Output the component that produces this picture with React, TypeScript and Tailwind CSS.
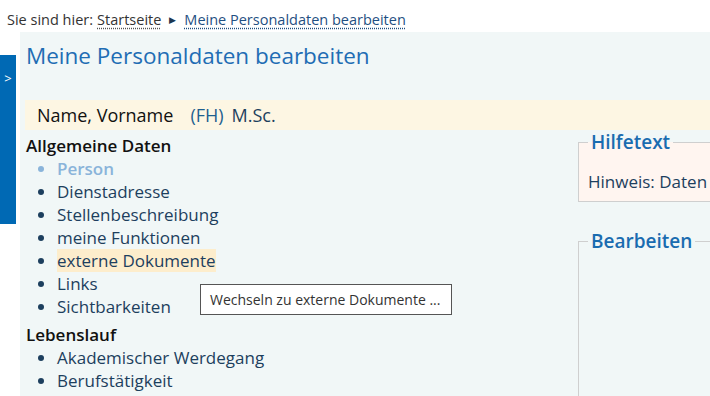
export default function App() {
  const general = [
    { label: 'Person', active: true },
    { label: 'Dienstadresse' },
    { label: 'Stellenbeschreibung' },
    { label: 'meine Funktionen' },
    { label: 'externe Dokumente', hover: true },
    { label: 'Links' },
    { label: 'Sichtbarkeiten' },
  ];
  const cv = ['Akademischer Werdegang', 'Berufstätigkeit'];

  return (
    <div
      className="relative w-[710px] h-[396px] overflow-hidden bg-white"
      style={{ fontFamily: '"Open Sans", "Noto Sans", sans-serif' }}
    >
      {/* Breadcrumb */}
      <div className="h-[32px] pl-[7px] pt-[8px] text-[14.5px] leading-[22px] text-[#333] flex items-center gap-[4px] whitespace-nowrap">
        <span>Sie sind hier:</span>
        <a className="underline decoration-dotted decoration-[#555] underline-offset-[3px]">Startseite</a>
        <span className="text-[9px] text-[#1c3650] px-[4px]">▶</span>
        <a className="text-[#1f4f82] underline decoration-dotted decoration-[#1f4f82] underline-offset-[3px]">
          Meine Personaldaten bearbeiten
        </a>
      </div>

      <div className="flex">
        {/* Side tab */}
        <div className="w-[16px] shrink-0 mt-[23px] h-[169px] bg-[#0069b4] text-white text-[13px] leading-none flex justify-center pt-[17px]">
          &gt;
        </div>

        {/* Main panel */}
        <div className="ml-[4px] w-[700px] shrink-0 h-[364px] bg-[#f1f7f7]">
          <h1 className="pl-[6px] pt-[9px] text-[22.5px] leading-[30px] text-[#1f6db4] whitespace-nowrap">
            Meine Personaldaten bearbeiten
          </h1>

          <div className="ml-[5px] mt-[29px] h-[30px] bg-[#fdf6e3] pl-[12px] flex items-center text-[18px] whitespace-nowrap">
            <span className="text-[#111]">Name, Vorname</span>
            <span className="ml-[17px] text-[#1f5f8f]">(FH)</span>
            <span className="ml-[8px] text-[#1d3f5e]">M.Sc.</span>
          </div>

          <div className="flex pl-[6px]">
            {/* Left column */}
            <div className="w-[552px] shrink-0 pt-[4px] text-[17px] leading-[23px]">
              <div className="font-semibold text-[#111]">Allgemeine Daten</div>
              <ul className="list-disc pl-[31px]">
                {general.map((item) => (
                  <li
                    key={item.label}
                    className={item.active ? 'text-[#8ab4da] font-semibold' : 'text-[#1d3f5e]'}
                  >
                    <span className={item.hover ? 'bg-[#fdedcc]' : ''}>{item.label}</span>
                  </li>
                ))}
              </ul>
              <div className="mt-[5px] font-semibold text-[#111]">Lebenslauf</div>
              <ul className="list-disc pl-[31px]">
                {cv.map((c) => (
                  <li key={c} className="text-[#1d3f5e]">
                    {c}
                  </li>
                ))}
              </ul>
            </div>

            {/* Right column */}
            <div className="w-[300px] shrink-0">
              <fieldset className="border border-[#cfcfcf] bg-[#fff5f0] px-[9px] pb-[8px]">
                <legend className="px-[3px] text-[19px] leading-[24px] font-semibold text-[#1a6cb0]">
                  Hilfetext
                </legend>
                <div className="pt-[17px] text-[17px] leading-[22px] text-[#1d3f5e] whitespace-nowrap">
                  Hinweis: Daten
                </div>
              </fieldset>
              <fieldset className="mt-[27px] h-[200px] border border-[#cfcfcf] px-[9px]">
                <legend className="px-[3px] text-[19px] leading-[24px] font-semibold text-[#1a6cb0]">
                  Bearbeiten
                </legend>
              </fieldset>
            </div>
          </div>
        </div>
      </div>

      {/* Tooltip */}
      <div className="absolute left-[200px] top-[284px] w-[252px] h-[31px] border border-[#555] bg-white pl-[9px] text-[14px] leading-[29px] text-[#333] whitespace-nowrap">
        Wechseln zu externe Dokumente ...
      </div>
    </div>
  );
}
